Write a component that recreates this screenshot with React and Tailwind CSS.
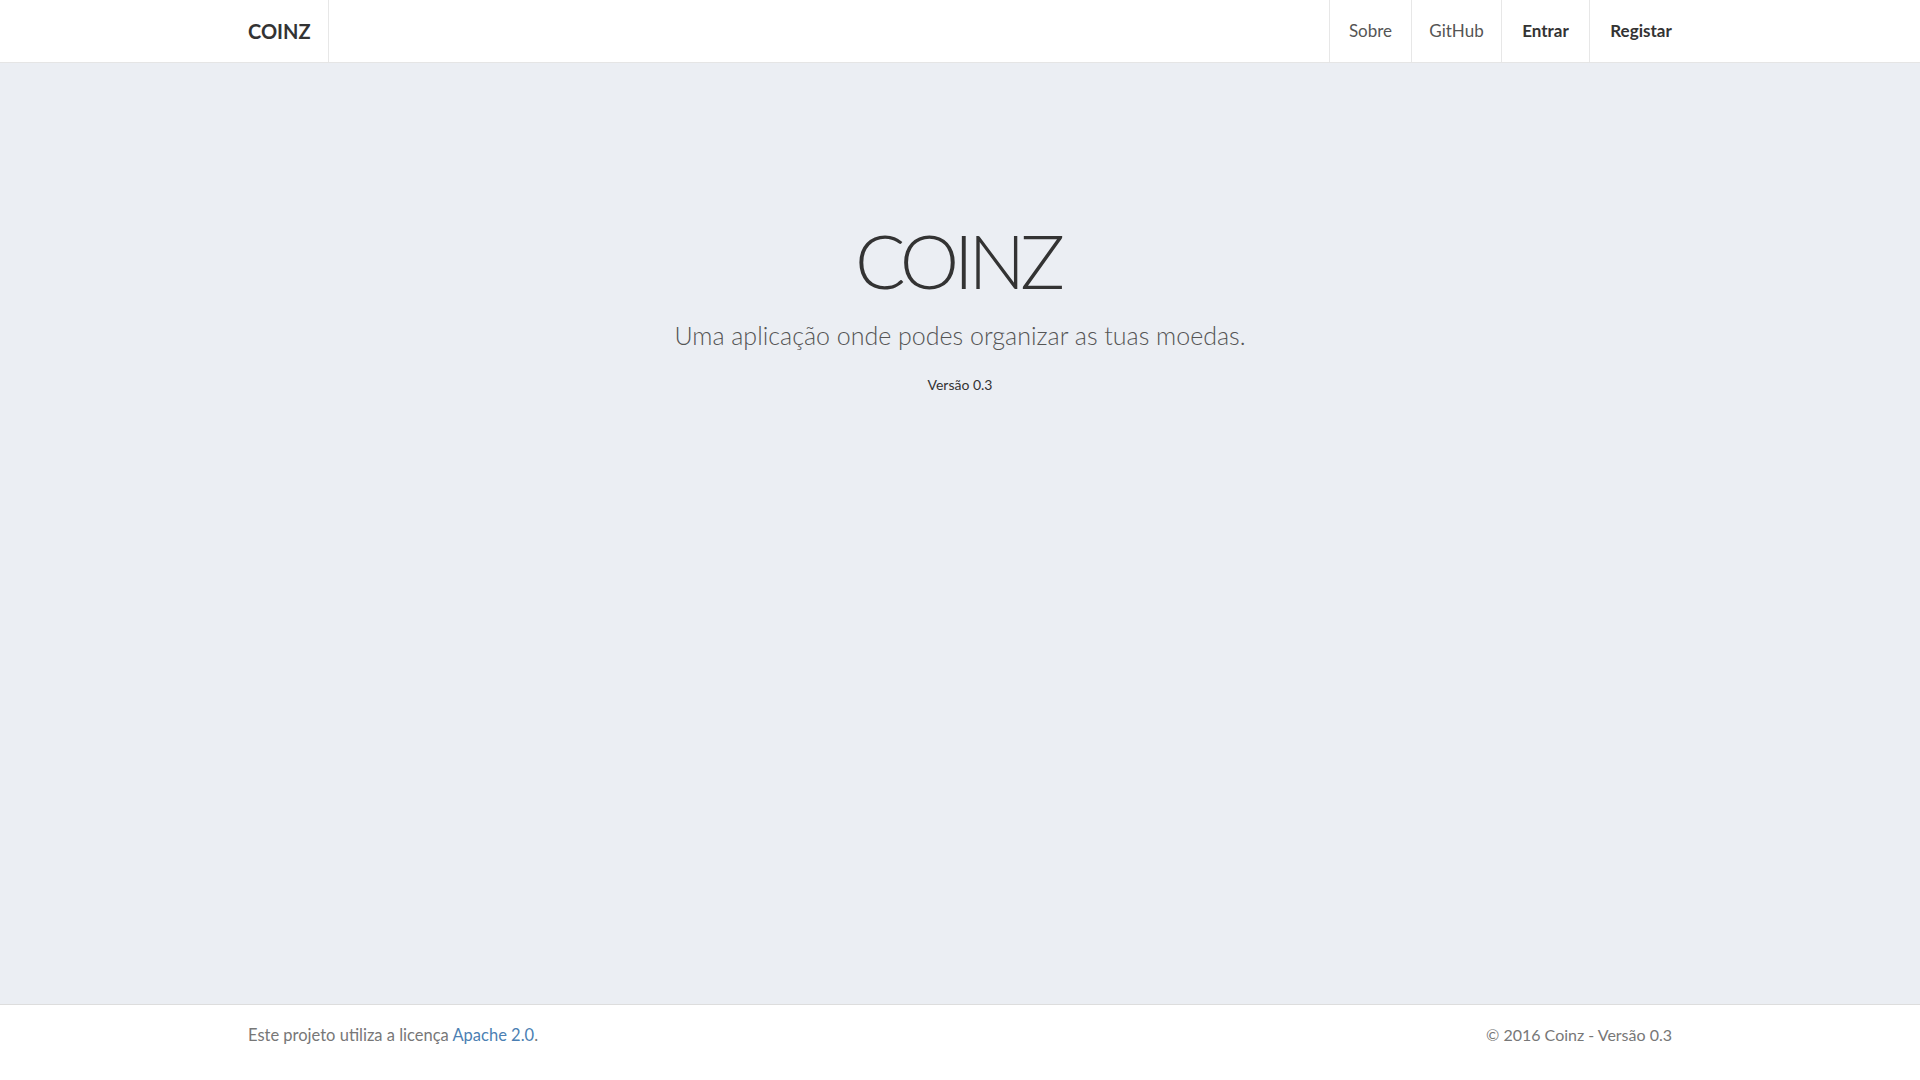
export default function App() {
  const font = { fontFamily: 'Lato, "Noto Sans", sans-serif' }
  return (
    <div className="min-h-screen flex flex-col bg-[#ebeef3] text-[#333]" style={font}>
      {/* Navbar */}
      <header className="bg-white border-b border-[#e5e5e5]">
        <div className="w-[1424px] mx-auto h-[62px] flex items-stretch justify-between">
          <a className="w-[81px] flex items-center border-r border-[#e7e7e7] text-[20px] font-bold text-[#333]">
            COINZ
          </a>
          <nav className="flex items-stretch -mr-5">
            <a className="w-[82px] flex items-center justify-center border-l border-[#e7e7e7] text-[17px] text-[#555]">Sobre</a>
            <a className="w-[90px] flex items-center justify-center border-l border-[#e7e7e7] text-[17px] text-[#555]">GitHub</a>
            <a className="w-[88px] flex items-center justify-center border-l border-[#e7e7e7] text-[17px] font-bold text-[#333]">Entrar</a>
            <a className="w-[103px] flex items-center justify-center border-l border-[#e7e7e7] text-[17px] font-bold text-[#333]">Registar</a>
          </nav>
        </div>
      </header>

      {/* Hero */}
      <main className="flex-1 flex flex-col items-center pt-[160px]">
        <h1 className="-ml-[5px] text-[75px] leading-none font-light tracking-[-5px] text-[#333]">COINZ</h1>
        <p className="mt-[25px] text-[25px] leading-none font-light text-[#555]">
          Uma aplicação onde podes organizar as tuas moedas.
        </p>
        <p className="mt-[30px] text-[14px] leading-none text-[#333]">Versão 0.3</p>
      </main>

      {/* Footer */}
      <footer className="bg-white border-t border-[#ddd] h-[76px]">
        <div className="w-[1424px] mx-auto pt-[22px] flex justify-between text-[16.5px] leading-none text-[#777]">
          <p>
            Este projeto utiliza a licença <a className="text-[#4b7fb3]">Apache 2.0</a>.
          </p>
          <p className="text-[16px]">© 2016 Coinz - Versão 0.3</p>
        </div>
      </footer>
    </div>
  )
}
